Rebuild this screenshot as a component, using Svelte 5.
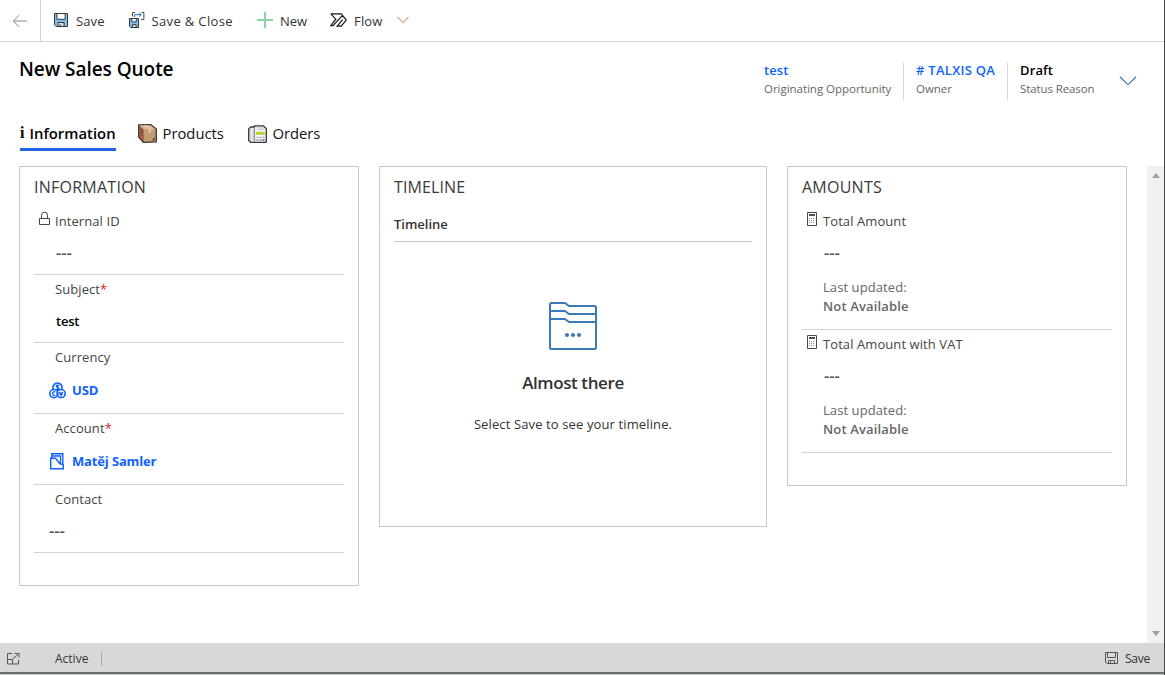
<script>
  const record = [
    { label: 'Internal ID', value: '---', kind: 'empty', lock: true },
    { label: 'Subject', value: 'test', kind: 'text', required: true },
    { label: 'Currency', value: 'USD', kind: 'lookup', icon: 'currency' },
    { label: 'Account', value: 'Matěj Samler', kind: 'lookup', icon: 'account', required: true },
    { label: 'Contact', value: '---', kind: 'empty lead' }
  ];
  const amounts = ['Total Amount', 'Total Amount with VAT'];
</script>

{#snippet lockIcon()}
  <svg class="lock" width="13" height="16" viewBox="0 0 13 16" fill="none" stroke="#444">
    <path d="M1.5 7.5h10v6h-10zM3.5 7.5V4.2a3 3 0 0 1 6 0V7.5" />
  </svg>
{/snippet}

{#snippet calcIcon()}
  <svg class="calc" width="10" height="14" viewBox="0 0 10 14" fill="none">
    <path d="M.5.5h9v13h-9z" stroke="#4a4550" />
    <path d="M2 3h6" stroke="#55505c" stroke-width="2" />
    <path d="M2 6.5h6M2 8.5h6M2 10.5h6" stroke="#8a8a96" stroke-dasharray="1 1" />
  </svg>
{/snippet}

<div class="app">
  <header class="commands">
    <button class="back" aria-label="Back">
      <svg width="16" height="14" viewBox="0 0 16 14" fill="none" stroke="#8a8a8a"><path d="M15 7H1.4M7.2 1.2 1.3 7l5.9 5.8" /></svg>
    </button>
    <button class="cmd save">
      <svg width="14" height="14" viewBox="0 0 14 14">
        <path d="M.5.5h13v13H2.2L.5 11.8z" fill="#83beec" stroke="#333a42" />
        <path d="M2.9.5h8.2v5.8H2.9z" fill="#fff" stroke="#333a42" />
        <path d="M3.9 13.5v-4h6.2v4z" fill="#ddd" stroke="#333a42" />
        <path d="M5.5 11.5h1.2v2H5.5z" fill="#333a42" />
      </svg>
      <span>Save</span>
    </button>
    <button class="cmd saveclose">
      <svg width="16" height="17" viewBox="0 0 16 17" fill="none">
        <path d="M.5 6.5h9v9H1.7L.5 14.3z" fill="#83beec" stroke="#333a42" />
        <path d="M2.8 6.5h4.5v3.4H2.8z" fill="#fff" stroke="#333a42" />
        <path d="M3.2 15.5v-2.8h3.9v2.8z" fill="#ddd" stroke="#333a42" />
        <path d="M3.5 4.5v-4H6M12.5.5h2.4v7H12" stroke="#4a4a4a" />
        <path d="M5.5 5V2.7h6.6M10.2.8l2 1.9-2 1.9" stroke="#2471bd" />
      </svg>
      <span>Save &amp; Close</span>
    </button>
    <button class="cmd new">
      <svg width="16" height="16" viewBox="0 0 16 16"><path d="M7 0h2v7h7v2H9v7H7V9H0V7h7z" fill="#8cd3a6" /></svg>
      <span>New</span>
    </button>
    <button class="cmd flow">
      <svg width="17" height="14" viewBox="0 0 17 14" fill="none" stroke="#151515" stroke-width="1.2">
        <path d="M.8.8h10.500l5 6.200-5 6.200H7.200L12.600 6.600M.8.800 5.800 6.200.8 12.700H3L12.500 2.400" />
      </svg>
      <span>Flow</span>
      <svg class="chev" width="12" height="8" viewBox="0 0 12 8" fill="none" stroke="#a8702f"><path d="m.5 1 5.500 5.500L11.500 1" /></svg>
    </button>
  </header>

  <section class="head">
    <h1>New Sales Quote</h1>
    <div class="facts">
      <div class="fact f1"><b class="link">test</b><span>Originating Opportunity</span></div>
      <div class="fact f2"><b class="link"># TALXIS QA</b><span>Owner</span></div>
      <div class="fact f3"><b>Draft</b><span>Status Reason</span></div>
      <svg class="expand" width="18" height="10" viewBox="0 0 18 10" fill="none" stroke="#33709f" stroke-width="1.1"><path d="m1 1 8 7.6L17 1" /></svg>
    </div>
  </section>

  <nav class="tabs">
    <a class="tab active" href="#information"><i>i</i> Information</a>
    <a class="tab products" href="#products">
      <svg width="19" height="19" viewBox="0 0 19 19">
        <path d="M.7.8 12.5.6l5.8 4.3v13L5.3 18.3.7 13z" fill="#c49a73" stroke="#3c3431" stroke-width="1.3" stroke-linejoin="round" />
        <path d="M1.3 1.4 5.6 5.6v12L1.3 12.8z" fill="#8a573f" />
        <path d="M1.6 1.3h10.7l5 3.9H5.8z" fill="#dfba96" />
        <path d="m6 1.3 4.8 3.9v4l2-.8V5.2L8.3 1.3z" fill="#e3cdb8" />
        <path d="M2.4 11v2.6l2 2v-2.8z" fill="#f04a55" />
        <path d="m13.5 16.5 3.2-3.2v3z" fill="#5b4437" />
      </svg>
      <span>Products</span>
    </a>
    <a class="tab orders" href="#orders">
      <svg width="19" height="18" viewBox="0 0 19 18">
        <path d="M6.5.8h8.7l3.1 3v13.5H2.5L.7 15.5V4l2-2h3.8z" fill="#f4f4f4" stroke="#373737" stroke-width="1.3" stroke-linejoin="round" />
        <path d="M2 3.5h4.3v12.3H2z" fill="#c9cdd0" />
        <path d="M3.2 3.6h1.2v11.8H3.2z" fill="#fff" />
        <path d="M6.6 2v14.7" stroke="#8c8c8c" />
        <path d="M8 6.8h8.6v3H8z" fill="#b9d431" />
        <path d="M9 2.2h6M9 4.2h7" stroke="#bbb" />
        <path d="M8.5 12.3h8" stroke="#999" stroke-dasharray="2 1" />
        <path d="M8.5 15h2" stroke="#40b2e0" stroke-width="1.5" /><path d="M11.5 15h2" stroke="#dc5599" stroke-width="1.5" /><path d="M14.5 15h2" stroke="#555" stroke-width="1.5" />
      </svg>
      <span>Orders</span>
    </a>
  </nav>

  <div class="body">
    <main class="sections">
      <section class="card info">
        <h2>INFORMATION</h2>
        {#each record as f}
          <div class="field" class:tall={f.kind === 'lookup'}>
            <div class="label">
              {#if f.lock}{@render lockIcon()}{/if}
              <span>{f.label}{#if f.required}<em>*</em>{/if}</span>
            </div>
            <div class="value {f.kind}">
              {#if f.icon === 'currency'}
                <svg width="17" height="17" viewBox="0 0 17 17" fill="none" stroke="#0f62fe" stroke-width="1.6">
                  <path d="M4.2 7.3a4.6 4.6 0 1 1 8.6 0" />
                  <circle cx="4.9" cy="11.6" r="4.1" /><circle cx="12.1" cy="11.6" r="4.1" />
                  <path d="M10 3.7c-.9-.7-2.8-.7-2.8.6 0 1.5 2.8.8 2.8 2.3 0 1.2-1.9 1.3-2.9.6M8.6 2.5v6M6.4 10c-1.9-.7-2.8.4-2.8 1.7s1.3 2 2.8 1.3M10.3 10l1.8 1.8L14 10M12.1 11.7v2.6M10.5 12.3h3.2" stroke-width="1.3" />
                </svg>
              {:else if f.icon === 'account'}
                <svg width="17" height="17" viewBox="0 0 17 17" fill="none" stroke="#0f62fe" stroke-width="1.4">
                  <path d="M1.700 5.300V15.800h12.600v-4.300L11 10.800 6.500 5.300zM2.700 5.300V.8h11.100v10.500M3 3h8.500v7.700" />
                </svg>
              {/if}
              <span>{f.value}</span>
            </div>
          </div>
        {/each}
      </section>

      <section class="card timeline">
        <h2>TIMELINE</h2>
        <h3>Timeline</h3>
        <div class="placeholder">
          <svg width="48" height="48" viewBox="0 0 48 48" fill="none" stroke="#3b7ab9" stroke-width="2" stroke-linejoin="round">
            <path d="M1 2.5Q1 1 2.5 1H16l4 3h25.5Q47 4 47 5.5v40Q47 47 45.5 47h-43Q1 47 1 45.5zM1 9h15l4 3h27M1 17h15l4 3h27" />
            <g fill="#3b7ab9" stroke="none"><circle cx="18" cy="33" r="2.1" /><circle cx="24" cy="33" r="2.1" /><circle cx="30" cy="33" r="2.1" /></g>
          </svg>
          <strong>Almost there</strong>
          <p>Select Save to see your timeline.</p>
        </div>
      </section>

      <section class="card amounts">
        <h2>AMOUNTS</h2>
        {#each amounts as name}
          <div class="field sum">
            <div class="label">{@render calcIcon()}<span>{name}</span></div>
            <div class="value empty"><span>---</span></div>
            <div class="updated">Last updated:<b>Not Available</b></div>
          </div>
        {/each}
      </section>
    </main>
    <div class="scroll">
      <svg width="8" height="5" viewBox="0 0 8 5"><path d="M4 0 8 5H0z" fill="#a0a0a0" /></svg>
      <svg width="8" height="5" viewBox="0 0 8 5"><path d="M0 0h8L4 5z" fill="#a0a0a0" /></svg>
    </div>
  </div>

  <footer>
    <svg class="pop" width="14" height="12" viewBox="0 0 14 12" fill="none" stroke="#555"><path d="M6 .5H1.5v10.5h11V7M1.5 6.5h5V11M6.5 6l6-5M8.5.5h4.5v4" /></svg>
    <span class="state">Active</span>
    <span class="save">
      <svg width="13" height="12" viewBox="0 0 13 12" fill="none" stroke="#555"><path d="M.5.5h12v11H2L.5 10zM2.5.5v5h8v-5M3.5 11.5v-3h6v3M5.5 9.5v2" /></svg>
      <span>Save</span>
    </span>
  </footer>
  <div class="edge"></div>
</div>

<style>
  :global(body) { background: #fff; overflow: hidden; }
  .app { box-sizing: border-box; width: 1165px; height: 675px; border-right: 1px solid #484644; display: flex; flex-direction: column; font: 13px/20px "Open Sans", "Noto Sans", sans-serif; color: #333; overflow: hidden; background: #fff; }
  svg { display: block; flex: none; }
  button { border: 0; background: none; padding: 0; margin: 0; font: inherit; color: inherit; display: flex; align-items: center; }
  h1, h2, h3, p { margin: 0; font-weight: 400; }

  .commands { box-sizing: border-box; height: 42px; border-bottom: 1px solid #d2d2d2; display: flex; flex: none; }
  .back { width: 41px; box-sizing: border-box; border-right: 1px solid #d2d2d2; padding-left: 12px; }
  .cmd span { padding-top: 1px; }
  .save { margin-left: 13px; gap: 8px; letter-spacing: .1px; }
  .save > svg { margin-top: -2px; }
  .saveclose { margin-left: 24px; gap: 7px; letter-spacing: .35px; }
  .saveclose > svg { margin-top: -1px; }
  .new { margin-left: 24px; gap: 7px; }
  .new > svg { margin-top: -1px; }
  .flow { margin-left: 23px; gap: 7px; letter-spacing: .15px; }
  .flow > svg { margin-top: -2px; }
  .flow .chev { margin-left: 7px; }

  .head { height: 64px; flex: none; display: flex; justify-content: space-between; box-sizing: border-box; padding: 15px 27px 0 19px; }
  h1 { font-size: 19px; line-height: 24px; letter-spacing: -.05px; font-weight: 600; color: #000; }
  .facts { display: flex; padding-top: 5px; }
  .fact { height: 38px; box-sizing: border-box; border-right: 1px solid #d8d8d8; padding: 0 12px; display: flex; flex-direction: column; }
  .fact b { font-weight: 600; font-size: 13px; line-height: 16px; padding-bottom: 2px; color: #000; white-space: nowrap; letter-spacing: .12px; }
  .fact b.link { color: #0f62fe; }
  .fact span { font-size: 11.5px; line-height: 18px; color: #666; white-space: nowrap; letter-spacing: -.03px; }
  .f1 { width: 152px; }
  .f2 { width: 104px; }
  .f2 b.link { letter-spacing: .27px; }
  .f3 { border: 0; width: 112px; }
  .f3 span { letter-spacing: -.1px; }
  .expand { margin-top: 14px; margin-left: -1px; }

  .tabs { height: 60px; flex: none; display: flex; align-items: flex-start; padding: 15px 0 0 20px; box-sizing: border-box; }
  .tab { height: 30px; box-sizing: border-box; display: flex; align-items: center; text-decoration: none; color: #111; font-size: 14.8px; padding-bottom: 4px; white-space: pre; }
  .tab span { margin-top: -2px; margin-left: -.5px; }
  .active { font-weight: 600; width: 96px; border-bottom: 3px solid #2266e3; padding-bottom: 4px; color: #000; letter-spacing: .04px; }
  .active i { font: bold 16px "Liberation Serif", serif; margin-right: 1px; }
  .products { margin-left: 22px; gap: 6px; }
  .products svg, .orders svg { margin-top: -1px; }
  .orders { margin-left: 24px; gap: 6px; }

  .body { height: 477px; flex: none; display: flex; justify-content: space-between; }
  .sections { display: flex; align-items: flex-start; gap: 20px; padding-left: 19px; }
  .card { box-sizing: border-box; border: 1px solid #c8c8c8; padding: 0 14px; width: 340px; }
  .info { height: 420px; }
  .timeline { width: 388px; height: 361px; }
  .amounts { height: 320px; }
  h2 { font-size: 16px; line-height: 40px; height: 40px; font-weight: 400; color: #3a3a3a; letter-spacing: .25px; }
  .timeline h2 { letter-spacing: .1px; }
  .field { box-sizing: border-box; height: 68px; border-bottom: 1px solid #d2d2d2; }
  .tall { height: 71px; }
  .sum { height: 123px; }
  .label { height: 28px; line-height: 28px; padding-left: 21px; position: relative; color: #444; letter-spacing: .08px; }
  .label em { color: #e81123; font-style: normal; }
  .lock { position: absolute; left: 4px; top: 4px; }
  .calc { position: absolute; left: 5px; top: 5px; }
  .value { height: 36px; padding-left: 22px; display: flex; align-items: center; color: #444; font-weight: 600; }
  .empty { font-size: 16.5px; color: #555; }
  .text { color: #000; letter-spacing: -.2px; }
  .lead { padding-left: 15px; }
  .lookup { padding-left: 15px; color: #0f62fe; font-weight: 700; height: 38px; letter-spacing: -.15px; }
  .lookup svg { margin-right: 6px; }
  .updated { line-height: 19px; padding: 7px 0 0 21px; color: #666; letter-spacing: .08px; }
  .updated b { display: block; font-weight: 600; letter-spacing: .15px; }
  h3 { font-size: 13px; font-weight: 600; line-height: 34px; border-bottom: 1px solid #c8c8c8; }
  .placeholder { display: flex; flex-direction: column; align-items: center; padding-top: 60px; }
  .placeholder strong { font-size: 17px; font-weight: 600; line-height: 24px; margin-top: 21px; letter-spacing: -.4px; }
  .placeholder p { margin-top: 19px; letter-spacing: .12px; }

  .scroll { width: 17px; background: #f1f1f1; display: flex; flex-direction: column; justify-content: space-between; align-items: center; padding: 7px 0; box-sizing: border-box; }

  footer { height: 29px; flex: none; background: #d8d8d8; display: flex; align-items: center; padding: 2px 14px 0 6px; box-sizing: border-box; font-size: 12px; }
  .state { margin-left: 35px; padding-right: 13px; border-right: 1px solid #aaa; line-height: 14px; }
  footer .save { margin-left: auto; display: flex; align-items: center; gap: 7px; letter-spacing: -.25px; }
  .edge { height: 3px; box-sizing: border-box; border-top: 2px solid #6e6e6e; background: #c4ccc8; }
</style>
